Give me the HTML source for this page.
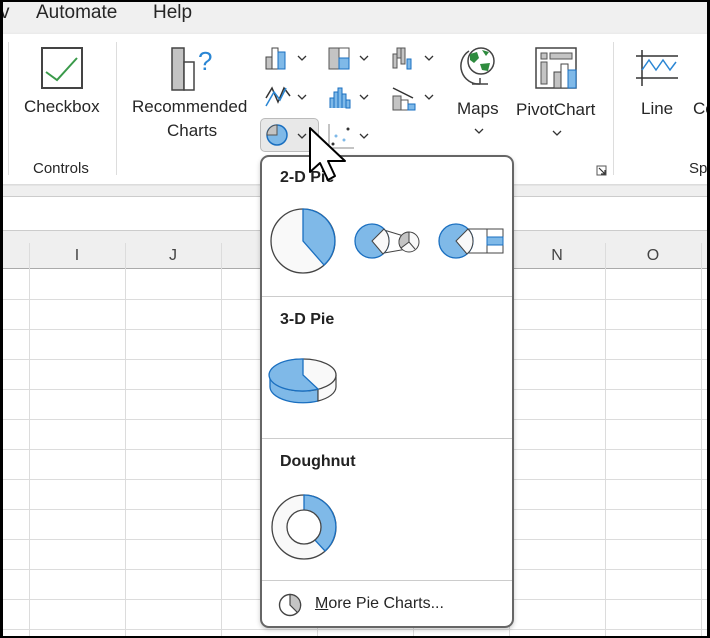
<!DOCTYPE html>
<html><head><style>
*{margin:0;padding:0;box-sizing:border-box}
body{width:710px;height:638px;overflow:hidden;background:#fff;font-family:"Liberation Sans",sans-serif;position:relative;color:#222}
.abs{position:absolute}
.t{font-size:17px;color:#262626;white-space:nowrap}
.col{position:absolute;font-size:16px;color:#444;width:96px;text-align:center;top:247px}
</style></head><body>
<svg width="0" height="0" style="position:absolute"><defs><symbol id="cv" viewBox="0 0 10 6"><path d="M1 1 L5 5 L9 1" fill="none" stroke="#333" stroke-width="1.3"/></symbol></defs></svg>
<div class="abs" style="left:0;top:0;width:710px;height:34px;background:#f0f0f0"></div>
<div class="abs t" style="left:0;top:2px;font-size:19px">v</div>
<div class="abs t" style="left:36px;top:2px;font-size:19px">Automate</div>
<div class="abs t" style="left:153px;top:2px;font-size:19px">Help</div>
<div class="abs" style="left:0;top:34px;width:710px;height:150px;background:#fff;box-shadow:0 2px 4px rgba(0,0,0,.18)"></div>
<div class="abs" style="left:8px;top:42px;width:1px;height:133px;background:#ddd"></div>
<div class="abs" style="left:116px;top:42px;width:1px;height:133px;background:#ddd"></div>
<div class="abs" style="left:613px;top:42px;width:1px;height:133px;background:#ddd"></div>
<svg class="abs" style="left:40px;top:46px" width="46" height="46"><rect x="2" y="2" width="40" height="40" fill="#fff" stroke="#444" stroke-width="2"/><path d="M6 26 L17 34 L37 12" fill="none" stroke="#3a9a4a" stroke-width="2"/></svg>
<div class="abs t" style="left:24px;top:97px">Checkbox</div>
<div class="abs t" style="left:33px;top:160px;font-size:15px">Controls</div>
<svg class="abs" style="left:168px;top:44px" width="50" height="48"><rect x="4" y="4" width="12" height="42" fill="#c4c4c4" stroke="#444" stroke-width="1.5"/><rect x="16" y="18" width="10" height="28" fill="#fff" stroke="#444" stroke-width="1.5"/><text x="30" y="26" font-size="26" fill="#2a86d4" font-family="Liberation Sans">?</text></svg>
<div class="abs t" style="left:132px;top:97px">Recommended</div>
<div class="abs t" style="left:167px;top:121px">Charts</div>
<svg class="abs" style="left:264px;top:44px" width="30" height="28"><rect x="2" y="13" width="6" height="12" fill="#c4c4c4" stroke="#444"/><rect x="8" y="4" width="6" height="21" fill="#fff" stroke="#444"/><rect x="14" y="8" width="7" height="17" fill="#7fb9e8" stroke="#1a6fc0"/></svg>
<svg class="abs" style="left:297px;top:55px" width="10" height="6"><use href="#cv"/></svg>
<svg class="abs" style="left:264px;top:84px" width="30" height="26"><path d="M2 14 L8 4 L14 18 L20 4 L26 12" fill="none" stroke="#333" stroke-width="1.5"/><path d="M2 22 L10 8 L16 16 L22 4" fill="none" stroke="#2a86d4" stroke-width="1.5"/></svg>
<svg class="abs" style="left:297px;top:94px" width="10" height="6"><use href="#cv"/></svg>
<div class="abs" style="left:260px;top:118px;width:59px;height:34px;background:#e8e8e8;border:1px solid #bbb;border-radius:5px"></div>
<svg class="abs" style="left:264px;top:122px" width="28" height="26"><circle cx="13" cy="13" r="10" fill="#7fb9e8" stroke="#1a6fc0" stroke-width="1.5"/><path d="M13 13 L13 3 A10 10 0 0 0 3 13 Z" fill="#c4c4c4" stroke="#555"/></svg>
<svg class="abs" style="left:297px;top:133px" width="10" height="6"><use href="#cv"/></svg>
<svg class="abs" style="left:326px;top:44px" width="30" height="28"><rect x="3" y="4" width="10" height="21" fill="#c4c4c4" stroke="#555"/><rect x="13" y="4" width="10" height="10" fill="#fff" stroke="#555"/><rect x="13" y="14" width="10" height="11" fill="#7fb9e8" stroke="#1a6fc0"/></svg>
<svg class="abs" style="left:359px;top:55px" width="10" height="6"><use href="#cv"/></svg>
<svg class="abs" style="left:326px;top:84px" width="30" height="28"><path d="M4 24 V14 H8 V24 M8 24 V8 H12 V24 M12 24 V4 H16 V24 M16 24 V10 H20 V24 M20 24 V16 H24 V24 Z" fill="#7fb9e8" stroke="#1a6fc0"/></svg>
<svg class="abs" style="left:359px;top:94px" width="10" height="6"><use href="#cv"/></svg>
<svg class="abs" style="left:326px;top:122px" width="30" height="28"><path d="M3 2 V26 H28" fill="none" stroke="#888"/><circle cx="22" cy="7" r="1.5" fill="#333"/><circle cx="10" cy="14" r="1.5" fill="#7fb9e8"/><circle cx="18" cy="18" r="1.5" fill="#7fb9e8"/><circle cx="7" cy="22" r="1.5" fill="#333"/></svg>
<svg class="abs" style="left:359px;top:133px" width="10" height="6"><use href="#cv"/></svg>
<svg class="abs" style="left:390px;top:44px" width="30" height="28"><path d="M3 10 H7 V24 H3 Z M7 4 H11 V14 H7 Z M11 4 H15 V20 H11 Z" fill="#c4c4c4" stroke="#555"/><rect x="17" y="15" width="4" height="10" fill="#7fb9e8" stroke="#1a6fc0"/></svg>
<svg class="abs" style="left:424px;top:55px" width="10" height="6"><use href="#cv"/></svg>
<svg class="abs" style="left:390px;top:84px" width="30" height="28"><path d="M3 4 L23 14" stroke="#333" stroke-width="1.5"/><rect x="3" y="12" width="8" height="14" fill="#c4c4c4" stroke="#555"/><rect x="11" y="16" width="7" height="10" fill="#fff" stroke="#555"/><rect x="18" y="20" width="7" height="6" fill="#7fb9e8" stroke="#1a6fc0"/></svg>
<svg class="abs" style="left:424px;top:94px" width="10" height="6"><use href="#cv"/></svg>
<svg class="abs" style="left:458px;top:44px" width="44" height="48"><path d="M11 7 A18 18 0 0 0 22 40" fill="none" stroke="#444" stroke-width="1.5"/><circle cx="23" cy="17" r="13" fill="#fff" stroke="#444" stroke-width="1.5"/><path d="M12 10 L19 8 L21 14 L16 19 L12 16 Z M24 6 L31 8 L28 12 Z M22 20 L32 19 L30 27 L24 26 Z" fill="#2e8b3e"/><path d="M22 34 V40 M14 40 H30" stroke="#444" stroke-width="1.5"/></svg>
<div class="abs t" style="left:457px;top:99px">Maps</div>
<svg class="abs" style="left:474px;top:128px" width="10" height="6"><use href="#cv"/></svg>
<svg class="abs" style="left:534px;top:46px" width="48" height="46"><rect x="2" y="2" width="40" height="40" fill="#fff" stroke="#444" stroke-width="1.5"/><rect x="7" y="7" width="6" height="6" fill="#c4c4c4" stroke="#555"/><rect x="16" y="7" width="22" height="6" fill="#c4c4c4" stroke="#555"/><rect x="7" y="16" width="6" height="22" fill="#c4c4c4" stroke="#555"/><rect x="20" y="26" width="7" height="16" fill="#c4c4c4" stroke="#444"/><rect x="27" y="18" width="7" height="24" fill="#fff" stroke="#444"/><rect x="34" y="24" width="8" height="18" fill="#7fb9e8" stroke="#1a6fc0"/></svg>
<div class="abs t" style="left:516px;top:100px">PivotChart</div>
<svg class="abs" style="left:552px;top:130px" width="10" height="6"><use href="#cv"/></svg>
<svg class="abs" style="left:596px;top:165px" width="11" height="11"><path d="M1 1 H10 V10 H1 Z" fill="none" stroke="#555"/><path d="M3 3 L9 9 M9 5 V9 H5" fill="none" stroke="#333" stroke-width="1.2"/></svg>
<svg class="abs" style="left:634px;top:48px" width="46" height="40"><path d="M8 2 V38 M2 8 H44 M2 30 H44" stroke="#333" stroke-width="1.5"/><path d="M8 22 L15 12 L22 22 L29 12 L36 22 L42 14" fill="none" stroke="#2a86d4" stroke-width="1.5"/></svg>
<div class="abs t" style="left:641px;top:99px">Line</div>
<div class="abs t" style="left:693px;top:99px">Co</div>
<div class="abs t" style="left:689px;top:160px;font-size:15px">Sp</div>
<div class="abs" style="left:0;top:186px;width:710px;height:11px;background:#efefef;border-bottom:1px solid #ccc"></div>
<div class="abs" style="left:0;top:230px;width:710px;height:39px;background:#efefef;border-top:1px solid #ccc;border-bottom:1px solid #aaa"></div>
<div class="col" style="left:29px">I</div>
<div class="col" style="left:125px">J</div>
<div class="col" style="left:509px">N</div>
<div class="col" style="left:605px">O</div>
<svg class="abs" style="left:0;top:243px" width="710" height="395">
<g stroke="#dcdcdc" stroke-width="1">
<path d="M29.5 0V395M125.5 0V395M221.5 0V395M317.5 0V395M413.5 0V395M509.5 0V395M605.5 0V395M701.5 0V395"/>
<path d="M0 56.5H710M0 86.5H710M0 116.5H710M0 146.5H710M0 176.5H710M0 206.5H710M0 236.5H710M0 266.5H710M0 296.5H710M0 326.5H710M0 356.5H710M0 386.5H710"/>
</g></svg>
<div class="abs" style="left:260px;top:155px;width:254px;height:473px;background:#fff;border:2px solid #666;border-radius:9px;box-shadow:0 2px 5px rgba(0,0,0,.2)">
<div class="abs" style="left:18px;top:12px;font-weight:bold;font-size:16px">2-D Pie</div>
<svg class="abs" style="left:6px;top:50px" width="244" height="72">
<circle cx="35" cy="34" r="32" fill="#f9f9f9" stroke="#444" stroke-width="1.3"/>
<path d="M35 34 V2 A32 32 0 0 1 56 58 Z" fill="#7fb9e8" stroke="#1a6fc0" stroke-width="1.3"/>
<path d="M116 23 L139 30 M116 46 L139 42" stroke="#444"/>
<circle cx="104" cy="34" r="17" fill="#7fb9e8" stroke="#1a6fc0" stroke-width="1.3"/>
<path d="M104 34 L116 22 A17 17 0 0 1 115 47 Z" fill="#f9f9f9" stroke="#444"/>
<circle cx="141" cy="35" r="10" fill="#f9f9f9" stroke="#444"/>
<path d="M141 35 V25 A10 10 0 0 0 133 41 L141 35 Z" fill="#c4c4c4" stroke="#444"/>
<path d="M141 35 L147 42" stroke="#444"/>
<rect x="200" y="22" width="35" height="24" fill="#fff" stroke="#444"/>
<path d="M219 22 V46" stroke="#444"/>
<rect x="219" y="30" width="16" height="8" fill="#7fb9e8" stroke="#1a6fc0"/>
<circle cx="188" cy="34" r="17" fill="#7fb9e8" stroke="#1a6fc0" stroke-width="1.3"/>
<path d="M188 34 L200 22 A17 17 0 0 1 199 47 Z" fill="#f9f9f9" stroke="#444"/>
</svg>
<div class="abs" style="left:0;top:139px;width:250px;height:1px;background:#ccc"></div>
<div class="abs" style="left:18px;top:154px;font-weight:bold;font-size:16px">3-D Pie</div>
<svg class="abs" style="left:6px;top:200px" width="80" height="56">
<path d="M2 18 V30 A33 16 0 0 0 50 44 V32 A33 16 0 0 1 2 18 Z" fill="#7fb9e8" stroke="#1a6fc0" stroke-width="1.3"/>
<path d="M50 32 V44 A33 16 0 0 0 68 30 V18 A33 16 0 0 1 50 32 Z" fill="#f9f9f9" stroke="#444" stroke-width="1.2"/>
<ellipse cx="35" cy="18" rx="33" ry="16" fill="#f9f9f9" stroke="#444" stroke-width="1.3"/>
<path d="M35 18 L35 2 A33 16 0 1 0 50 32 Z" fill="#7fb9e8" stroke="#1a6fc0" stroke-width="1.3"/>
</svg>
<div class="abs" style="left:0;top:281px;width:250px;height:1px;background:#ccc"></div>
<div class="abs" style="left:18px;top:296px;font-weight:bold;font-size:16px">Doughnut</div>
<svg class="abs" style="left:6px;top:334px" width="72" height="72">
<circle cx="36" cy="36" r="32" fill="#f9f9f9" stroke="#444" stroke-width="1.3"/>
<path d="M36 4 A32 32 0 0 1 57 60 L46 48 A17 17 0 0 0 36 19 Z" fill="#7fb9e8" stroke="#1a6fc0" stroke-width="1.3"/>
<circle cx="36" cy="36" r="17" fill="#fff" stroke="#444" stroke-width="1.3"/>
</svg>
<div class="abs" style="left:0;top:423px;width:250px;height:1px;background:#ccc"></div>
<svg class="abs" style="left:16px;top:436px" width="26" height="26"><circle cx="12" cy="12" r="10.5" fill="#fff" stroke="#444" stroke-width="1.4"/><path d="M12 12 V1.5 A10.5 10.5 0 0 1 19.5 19.5 Z" fill="#c4c4c4" stroke="#444" stroke-width="1.2"/></svg>
<div class="abs t" style="left:53px;top:438px;font-size:16px"><u>M</u>ore Pie Charts...</div>
</div>
<svg class="abs" style="left:305px;top:124px" width="46" height="62"><path d="M5 4 L5 48 L15 39 L23 56 L30 52 L23 37 L40 37 Z" fill="#fff" stroke="#000" stroke-width="2" stroke-linejoin="round"/></svg>
<div class="abs" style="left:0;top:0;width:710px;height:638px;border:2px solid #000;border-left-width:3px;border-right-width:3px;pointer-events:none"></div>
</body></html>
